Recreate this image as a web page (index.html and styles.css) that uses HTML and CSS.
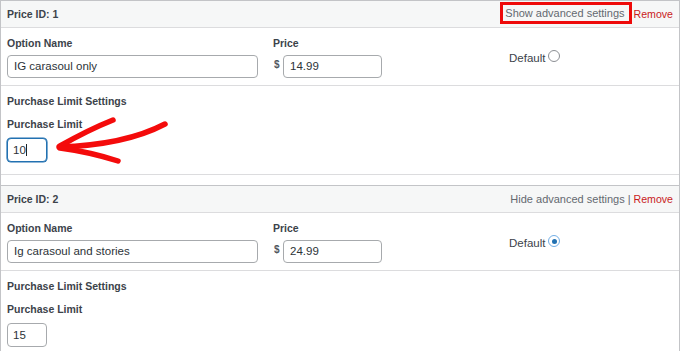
FILE: index.html
```html
<!DOCTYPE html>
<html>
<head>
<meta charset="utf-8">
<link rel="stylesheet" href="styles.css">
</head>
<body>
<div class="wrap">
  <section class="panel">
    <div class="panel-head">
      <span class="pid">Price ID: 1</span>
      <span class="actions"><span class="adv highlight">Show advanced settings</span><span class="remove">Remove</span></span>
    </div>
    <div class="row main-row">
      <div class="col col-name">
        <div class="label">Option Name</div>
        <div class="field field-name">IG carasoul only</div>
      </div>
      <div class="col col-price">
        <div class="label">Price</div>
        <div class="price-wrap"><span class="currency">$</span><div class="field field-price">14.99</div></div>
      </div>
      <div class="col col-default">
        <span class="default-text">Default</span><span class="radio"></span>
      </div>
    </div>
    <div class="row limit-row">
      <div class="label">Purchase Limit Settings</div>
      <div class="label sub">Purchase Limit</div>
      <div class="field field-limit focused">10<span class="caret"></span></div>
    </div>
  </section>

  <section class="panel">
    <div class="panel-head">
      <span class="pid">Price ID: 2</span>
      <span class="actions"><span class="adv">Hide advanced settings</span><span class="sep">|</span><span class="remove">Remove</span></span>
    </div>
    <div class="row main-row">
      <div class="col col-name">
        <div class="label">Option Name</div>
        <div class="field field-name">Ig carasoul and stories</div>
      </div>
      <div class="col col-price">
        <div class="label">Price</div>
        <div class="price-wrap"><span class="currency">$</span><div class="field field-price">24.99</div></div>
      </div>
      <div class="col col-default">
        <span class="default-text">Default</span><span class="radio checked"></span>
      </div>
    </div>
    <div class="row limit-row">
      <div class="label">Purchase Limit Settings</div>
      <div class="label sub">Purchase Limit</div>
      <div class="field field-limit">15</div>
    </div>
  </section>

  <svg class="arrow" width="680" height="351" viewBox="0 0 680 351">
    <g fill="none" stroke="#f40b0b" stroke-linecap="round" stroke-linejoin="round">
      <path d="M59,147 Q125,145 165,124" stroke-width="5.5"/>
      <path d="M60,146 Q88,130 113,120" stroke-width="5.5"/>
      <path d="M60,148 Q90,152 118,161" stroke-width="5.5"/>
    </g>
  </svg>
</div>
</body>
</html>
```

FILE: styles.css
```css
* { box-sizing: border-box; }

html, body {
  margin: 0;
  padding: 0;
  background: #fff;
}

body {
  font-family: "Liberation Sans", Arial, sans-serif;
  color: #3c434a;
  width: 680px;
  height: 351px;
  overflow: hidden;
}

.wrap {
  position: relative;
  width: 680px;
  height: 351px;
  border-left: 1px solid #c3c4c7;
  border-right: 1px solid #c3c4c7;
}

.panel {
  border-top: 1px solid #c3c4c7;
  border-bottom: 1px solid #dcdcde;
}

.panel + .panel {
  margin-top: 10px;
}

.panel-head {
  height: 27px;
  background: #f6f7f7;
  border-bottom: 1px solid #dcdcde;
  display: flex;
  align-items: center;
  justify-content: space-between;
  padding: 0 6px 0 6px;
}

.pid {
  font-weight: bold;
  font-size: 10.5px;
  color: #3c434a;
}

.actions {
  display: flex;
  align-items: center;
  font-size: 11px;
}

.adv {
  color: #646970;
}

.highlight {
  border: 3px solid #ee0a0a;
  padding: 1px 4px 1px 2px;
  line-height: 14px;
  margin-top: -3px;
  margin-right: 2px;
}

.sep {
  color: #646970;
  margin: 0 3px;
}

.remove {
  color: #c91b1b;
  font-size: 10.6px;
}

.row {
  border-bottom: 1px solid #dcdcde;
}

.row:last-child {
  border-bottom: none;
}

.main-row {
  display: flex;
  padding: 8px 6px 7px;
}

.label {
  font-weight: bold;
  font-size: 10.5px;
  line-height: 14px;
  color: #3c434a;
  margin-bottom: 5px;
}

.col-name {
  width: 251px;
}

.col-price {
  width: 109px;
  margin-left: 15px;
}

.col-default {
  margin-left: 127px;
  align-self: center;
  display: flex;
  align-items: center;
  font-size: 11.5px;
  color: #3c434a;
  padding-top: 1px;
}

.price-wrap {
  display: flex;
  align-items: flex-start;
}

.currency {
  width: 10px;
  padding-left: 1px;
  font-size: 10px;
  font-weight: bold;
  line-height: 19px;
  color: #50575e;
}

.field {
  height: 23px;
  border: 1px solid #a7aaad;
  border-radius: 4px;
  padding: 0 6px;
  font-size: 11.5px;
  line-height: 21px;
  color: #2c3338;
  background: #fff;
  white-space: nowrap;
}

.field-name { width: 251px; }
.field-price { width: 99px; }

.field-limit {
  width: 40px;
  height: 24px;
  line-height: 22px;
  padding: 0 5px;
}

.focused {
  border-color: #2271b1;
  box-shadow: 0 0 0 0.6px #2271b1;
}

.caret {
  display: inline-block;
  width: 1px;
  height: 12px;
  background: #1d2327;
  vertical-align: -2px;
  margin-left: 0.5px;
}

.limit-row {
  padding: 8px 6px 12px;
}

.limit-row .label {
  margin-bottom: 0;
}

.limit-row .label.sub {
  margin-top: 9px;
  margin-bottom: 7px;
}

.radio {
  display: inline-block;
  width: 12px;
  height: 12px;
  border: 1px solid #8c8f94;
  border-radius: 50%;
  margin-left: 3px;
  margin-top: -3px;
  position: relative;
  background: #fff;
}

.radio.checked {
  border-color: #72aee6;
}

.radio.checked::after {
  content: "";
  position: absolute;
  left: 2.5px;
  top: 2.5px;
  width: 5px;
  height: 5px;
  border-radius: 50%;
  background: #2271b1;
}

.arrow {
  position: absolute;
  left: -1px;
  top: 0;
  pointer-events: none;
}
```
